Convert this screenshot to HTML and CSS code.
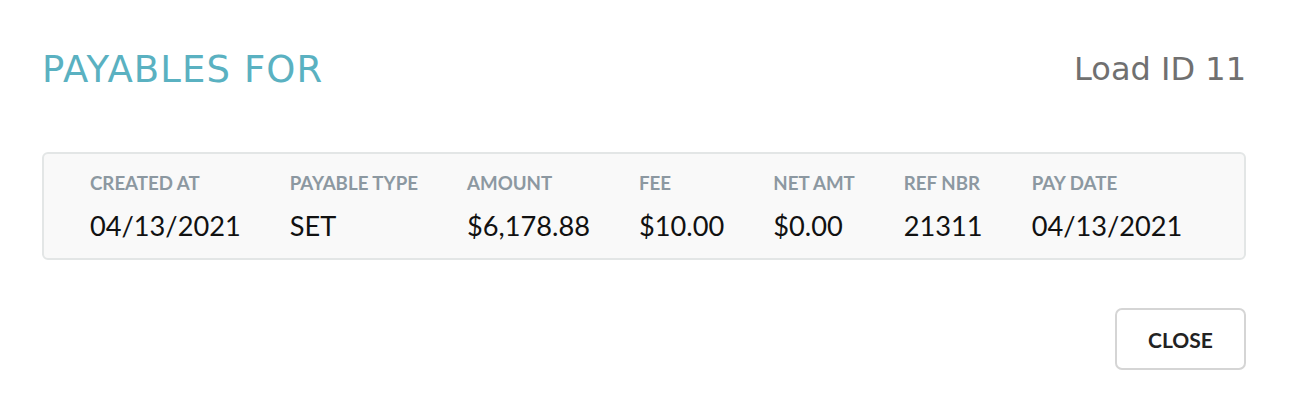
FILE: index.html
```html
<!DOCTYPE html>
<html>

<head lang="en">
    <meta charset="UTF-8">
    <title>Payables</title>
    <link rel="stylesheet" href="styles.css">
</head>

<body>
    <div class="modal">
        <div class="modal-head">
            <h2 class="title">PAYABLES FOR</h2>
            <span class="load-id">Load ID 11</span>
        </div>

        <div class="payable">
            <div class="field">
                <span class="label">CREATED AT</span>
                <span class="value">04/13/2021</span>
            </div>
            <div class="field">
                <span class="label">PAYABLE TYPE</span>
                <span class="value">SET</span>
            </div>
            <div class="field">
                <span class="label">AMOUNT</span>
                <span class="value">$6,178.88</span>
            </div>
            <div class="field">
                <span class="label">FEE</span>
                <span class="value">$10.00</span>
            </div>
            <div class="field">
                <span class="label">NET AMT</span>
                <span class="value">$0.00</span>
            </div>
            <div class="field">
                <span class="label">REF NBR</span>
                <span class="value">21311</span>
            </div>
            <div class="field">
                <span class="label">PAY DATE</span>
                <span class="value">04/13/2021</span>
            </div>
        </div>

        <div class="modal-foot">
            <button class="btn-close">CLOSE</button>
        </div>
    </div>
</body>

</html>
```

FILE: styles.css
```css
body,
h2 {
    margin: 0;
    padding: 0;
}

body {
    background: #fff;
    font-family: Lato, "Liberation Sans", sans-serif;
}

.modal {
    padding: 42px 46px 0 42px;
}

.modal-head {
    display: flex;
    justify-content: space-between;
    align-items: center;
    height: 54px;
}

.title {
    font-family: "DejaVu Sans", sans-serif;
    font-weight: normal;
    font-size: 37px;
    letter-spacing: 1.1px;
    color: #5ab1c1;
}

.load-id {
    font-family: "DejaVu Sans", sans-serif;
    font-weight: normal;
    font-size: 32px;
    color: #707070;
}

.payable {
    margin-top: 56px;
    height: 108px;
    box-sizing: border-box;
    padding: 16px 46px 0;
    background: #f9f9f9;
    border: 2px solid #e3e6e6;
    border-radius: 6px;
    display: flex;
    gap: 49px;
}

.field {
    display: flex;
    flex-direction: column;
}

.label {
    font-size: 18.7px;
    font-weight: bold;
    color: #8c98a1;
    line-height: 26px;
}

.value {
    margin-top: 13px;
    font-size: 27.2px;
    color: #111;
    line-height: 34px;
}

.modal-foot {
    display: flex;
    justify-content: flex-end;
    margin-top: 48px;
}

.btn-close {
    width: 131px;
    height: 62px;
    background: #fff;
    border: 2px solid #d5d5d5;
    border-radius: 7px;
    font-family: Lato, "Liberation Sans", sans-serif;
    font-weight: bold;
    font-size: 21px;
    color: #222;
    cursor: pointer;
}
```
